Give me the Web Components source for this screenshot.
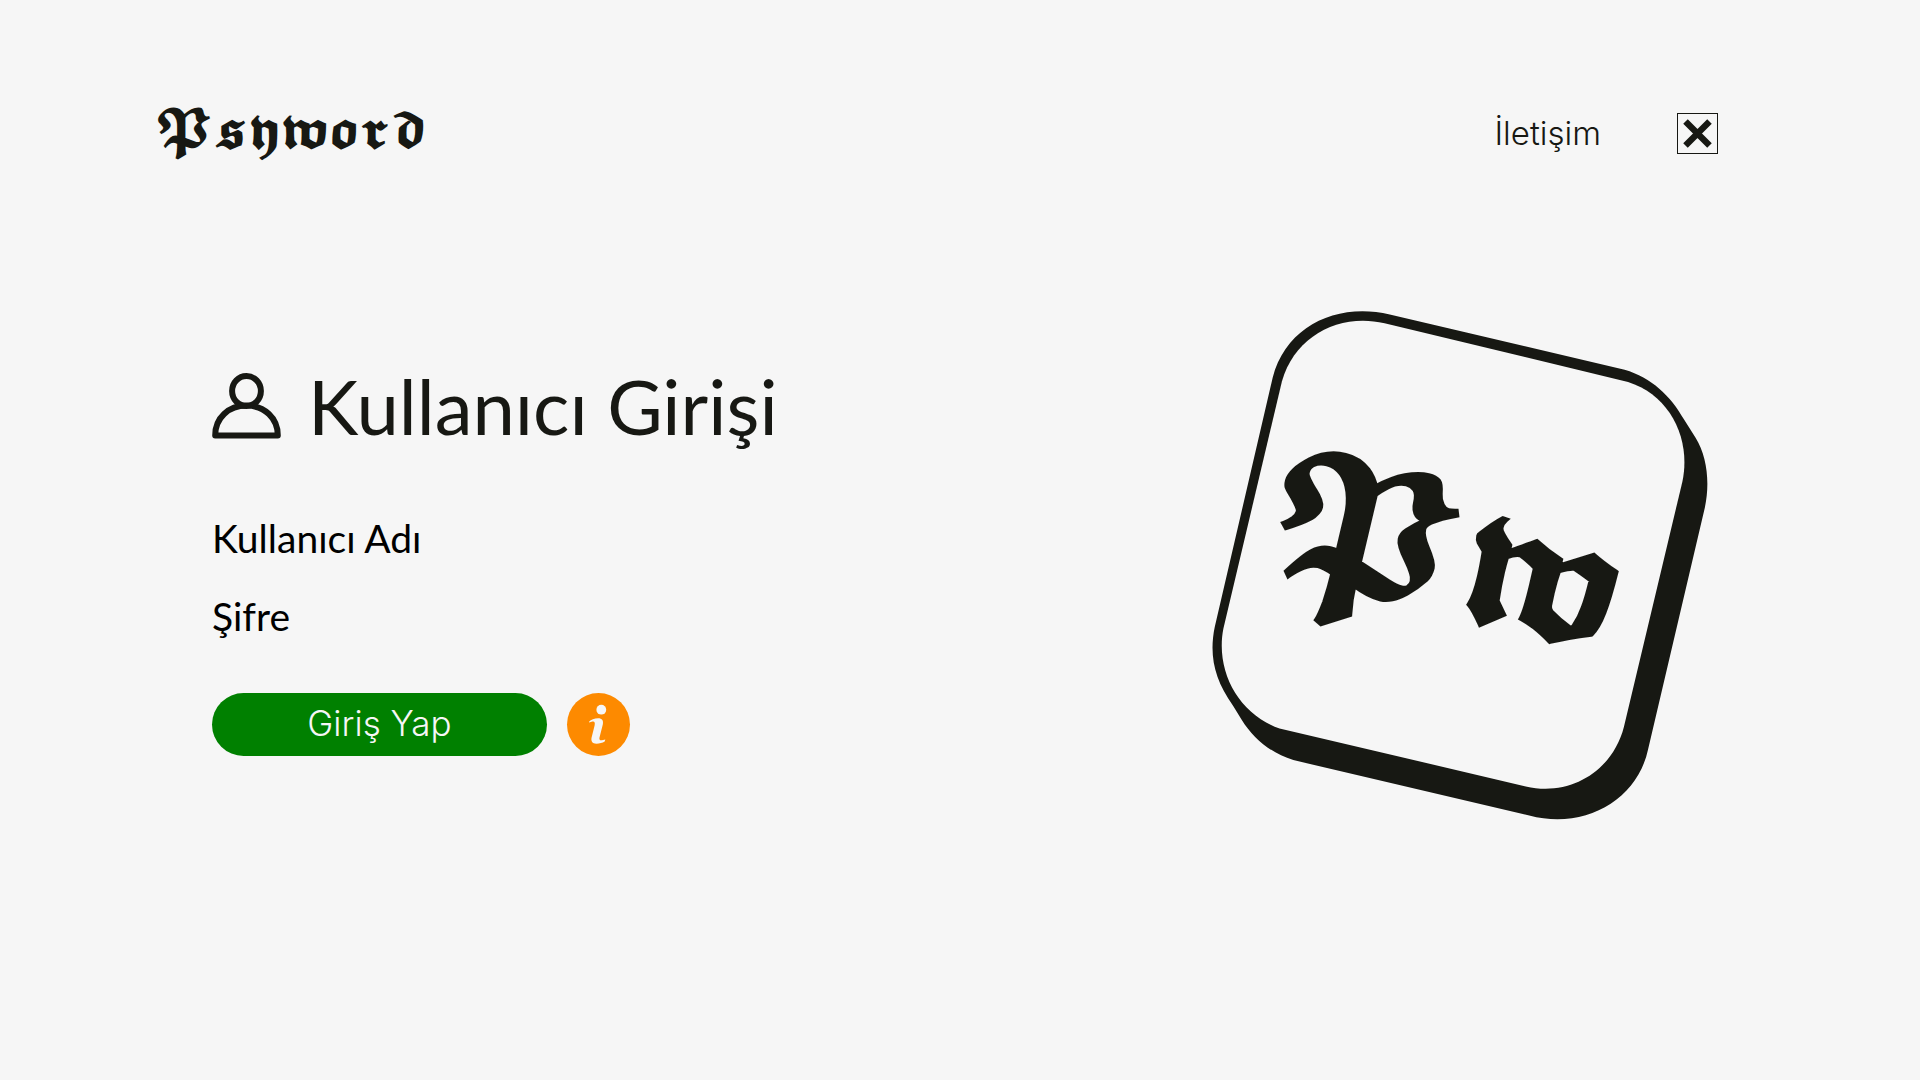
<!DOCTYPE html>
<html lang="tr">
<head>
<meta charset="utf-8">
<meta name="viewport" content="width=device-width, initial-scale=1">
<title>Psyword</title>
<style>
  html, body { margin: 0; min-height: 100%; background: #f6f6f6; }
  body { color: #171813; font-family: Lato, "Liberation Sans", sans-serif; }
</style>
</head>
<body>
<psy-page>
  <psy-header slot="header">
    <psy-wordmark slot="brand">𝕻𝖘𝖞𝖜𝖔𝖗𝖉</psy-wordmark>
    <psy-link slot="nav" href="#iletisim">İletişim</psy-link>
    <psy-close slot="nav"></psy-close>
  </psy-header>
  <psy-login></psy-login>
  <psy-emblem></psy-emblem>
</psy-page>
<script>
function define(name, html, setup) {
  customElements.define(name, class extends HTMLElement {
    constructor() {
      super();
      this.attachShadow({ mode: "open" }).innerHTML = html;
    }
    connectedCallback() { if (setup) setup(this, this.shadowRoot); }
  });
}

define("psy-wordmark", `
  <style>
    :host { display: block; font: 700 48px/74px "DejaVu Math TeX Gyre", "Liberation Serif", serif; }
  </style>
  <slot></slot>`);

define("psy-link", `
  <style>
    :host { display: block; }
    a { color: inherit; text-decoration: none; font: 300 33px/40px Inter, "Liberation Sans", sans-serif; }
  </style>
  <a><slot></slot></a>`, (host, root) => {
    root.querySelector("a").setAttribute("href", host.getAttribute("href"));
  });

define("psy-close", `
  <style>
    :host { display: block; }
    button { display: block; box-sizing: border-box; width: 41px; height: 41px; padding: 0; border: 1px solid #171813; background: none; color: inherit; cursor: pointer; }
    svg { display: block; width: 39px; height: 39px; }
  </style>
  <button type="button" aria-label="Kapat">
    <svg viewBox="0 0 39 39" fill="none" stroke="currentColor" stroke-width="6.4"><path d="M7.5 7.5 31.5 31.5M31.5 7.5 7.5 31.5"/></svg>
  </button>`);

define("psy-header", `
  <style>
    :host { display: block; }
    header { display: flex; align-items: center; justify-content: space-between; }
    nav { display: flex; align-items: center; gap: 76px; }
  </style>
  <header><slot name="brand"></slot><nav><slot name="nav"></slot></nav></header>`);

define("psy-user-icon", `
  <style>:host { display: block; } svg { display: block; width: 69px; height: 66px; }</style>
  <svg viewBox="0 0 69 66" fill="none" stroke="currentColor" stroke-width="6" stroke-linejoin="round" aria-hidden="true">
    <ellipse cx="34.5" cy="18" rx="14.4" ry="15"/>
    <path d="M3.2 62.4C3.2 45 16.5 32.6 34.5 32.6S65.8 45 65.8 62.4Z"/>
  </svg>`);

define("psy-field", `
  <style>
    :host { display: block; }
    div { display: flex; align-items: center; gap: 24px; }
    label, input { font: 400 39px/48px Lato, "Liberation Sans", sans-serif; color: #000; }
    input { flex: 1; min-width: 0; height: 48px; padding: 0; border: 0; outline: 0; background: none; }
  </style>
  <div><label for="field"><slot></slot></label><input id="field"></div>`, (host, root) => {
    root.querySelector("input").type = host.getAttribute("type") || "text";
  });

define("psy-submit", `
  <style>
    :host { display: block; flex: 0 0 335px; }
    button { display: block; width: 100%; height: 63px; padding: 0 0 4px; border: 0; border-radius: 32px; background: #008000; color: #f6f6f6; font: 300 35px/40px Inter, "Liberation Sans", sans-serif; cursor: pointer; }
  </style>
  <button type="submit"><slot></slot></button>`);

define("psy-info", `
  <style>
    :host { display: block; }
    button { display: block; width: 63px; height: 63px; padding: 0; border: 0; border-radius: 50%; background: #fd8a00; color: #f6f6f6; cursor: pointer; }
    svg { display: block; width: 63px; height: 63px; }
  </style>
  <button type="button" aria-label="Bilgi">
    <svg viewBox="0 0 63 63" fill="currentColor">
      <circle cx="34.3" cy="16.7" r="4.9"/>
      <path d="M22 28.8C24 26.4 27.5 25.2 31 25.2C35.3 25.2 36.6 27.6 35.8 31.6L32.5 44.5C32 46.8 33 47.6 35 47.2L38.3 46.6L37.7 48.6C35.5 50 32.5 50.7 29.5 50.7C25.3 50.7 23.8 48.4 24.6 44.6L27.6 32.5C28.2 29.4 27.5 28 25.3 28.5L22.2 29.4Z"/>
    </svg>
  </button>`);

define("psy-login", `
  <style>
    :host { display: block; }
    form { display: flex; flex-direction: column; }
    .title { display: flex; align-items: center; gap: 27px; margin-bottom: 66px; }
    h1 { margin: 0; font: 400 76px/84px Lato, "Liberation Sans", sans-serif; }
    .fields { display: flex; flex-direction: column; gap: 30px; margin-bottom: 53px; }
    .actions { display: flex; gap: 20px; }
  </style>
  <form>
    <div class="title"><psy-user-icon></psy-user-icon><h1>Kullanıcı Girişi</h1></div>
    <div class="fields">
      <psy-field>Kullanıcı Adı</psy-field>
      <psy-field type="password">Şifre</psy-field>
    </div>
    <div class="actions"><psy-submit>Giriş Yap</psy-submit><psy-info></psy-info></div>
  </form>`);

define("psy-emblem", `
  <style>
    :host { display: block; }
    svg { display: block; width: 100%; height: auto; }
    text { font: 700 165px "DejaVu Math TeX Gyre", "Liberation Serif", serif; }
  </style>
  <svg viewBox="0 0 540 550" fill="currentColor">
    <g transform="scale(.3444 .3508)">
      <path d="M580 70L1262 227C1340 250 1395 300 1435 370L1468 421C1502 475 1510 550 1495 620L1330 1310C1298 1455 1145 1540 985 1498L300 1340C235 1320 185 1280 150 1225L125 1185C70 1110 55 1040 72 960L240 250C280 100 430 35 580 70Z"/>
      <path fill="#f6f6f6" d="M565 95L1272 262C1395 300 1455 425 1430 545L1260 1245C1228 1370 1105 1445 975 1415L260 1250C140 1208 73 1085 97 965L267 260C305 130 435 65 565 95Z"/>
    </g>
    <text transform="translate(64 275) rotate(13.3)">𝕻𝖜</text>
  </svg>`);

define("psy-page", `
  <style>
    :host { display: flex; flex-direction: column; box-sizing: border-box; min-height: 100vh; padding: 96px 202px 96px 155px; }
    main { display: grid; grid-template-columns: minmax(0, 1fr) 540px; align-items: start; padding: 120px 0 0 57px; margin-right: -12px; }
    ::slotted(psy-login) { padding-top: 74px; }
  </style>
  <slot name="header"></slot>
  <main><slot></slot></main>`);
</script>
</body>
</html>
